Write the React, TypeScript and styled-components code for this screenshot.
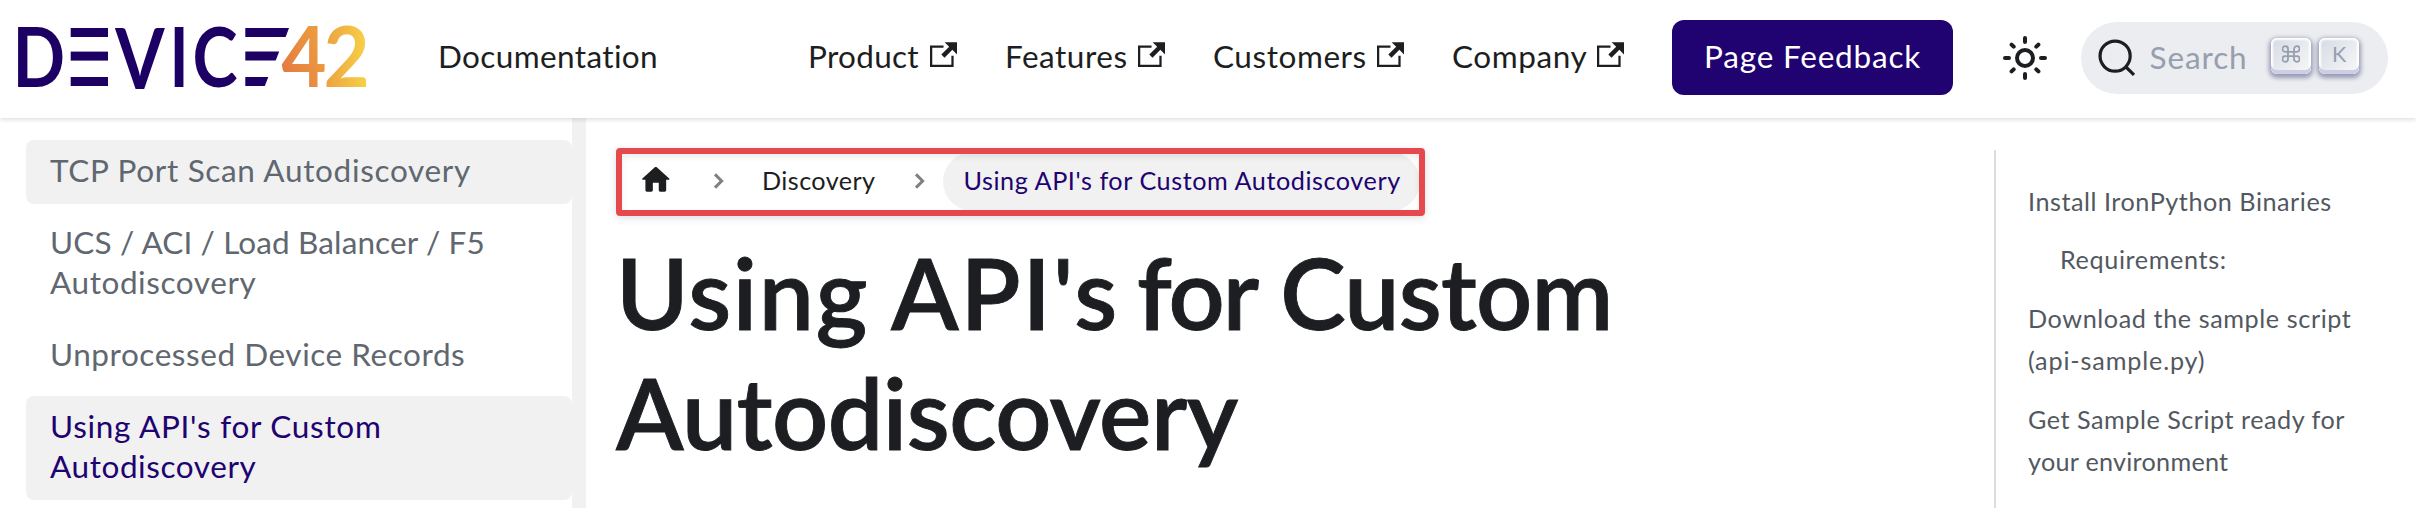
import React from "react";
import styled, { createGlobalStyle } from "styled-components";

const GlobalStyle = createGlobalStyle`
  * { box-sizing: border-box; }
  body { margin: 0; background: #fff; color: #1c1e21; font-family: Lato, "Open Sans", sans-serif; }
  a { color: inherit; text-decoration: none; }
  ul { list-style: none; margin: 0; padding: 0; }
  svg { display: block; flex: none; }
`;

const Page = styled.div`
  height: 508px;
  overflow: hidden;
  display: flex;
  flex-direction: column;
`;

const Header = styled.header`
  position: relative;
  z-index: 1;
  flex: none;
  height: 118px;
  padding: 0 28px 3px 10px;
  display: flex;
  align-items: center;
  background: #fff;
  box-shadow: 0 2px 4px rgba(0, 0, 0, 0.12);
  font-size: 31.5px;
  line-height: 40px;
  white-space: nowrap;
`;

const Brand = styled.a<{ $spacing: number }>`
  margin-left: 66px;
  padding-bottom: 4px;
  letter-spacing: ${(p) => p.$spacing}px;
`;

const Nav = styled.nav`
  margin-left: auto;
  margin-right: 48px;
  display: flex;
  gap: 48px;
`;

const NavLink = styled.a<{ $width: number; $spacing: number }>`
  width: ${(p) => p.$width}px;
  display: flex;
  align-items: center;
  justify-content: space-between;
  letter-spacing: ${(p) => p.$spacing}px;
  padding-bottom: 4px;
  svg { margin-bottom: 2px; }
`;

const FeedbackButton = styled.a`
  width: 281px;
  height: 75px;
  padding: 0 0 4px 32px;
  display: flex;
  align-items: center;
  border-radius: 12px;
  background: #200370;
  color: #fff;
  letter-spacing: 0.81px;
`;

const ThemeToggle = styled.button`
  margin: 1px 32px 0 48px;
  padding: 0;
  border: 0;
  background: none;
  color: #1c1e21;
`;

const SearchBox = styled.div`
  width: 307px;
  height: 72px;
  margin-top: 1px;
  padding: 0 29px 0 15.5px;
  display: flex;
  align-items: center;
  border-radius: 36px;
  background: #ebedf0;
  color: #1c1e21;
`;

const Placeholder = styled.span`
  flex: 1;
  margin-left: 13px;
  padding-bottom: 2px;
  color: #969faf;
  letter-spacing: 0.89px;
`;

const Keys = styled.span`
  display: flex;
  gap: 8px;
  padding-bottom: 4px;
`;

const Key = styled.kbd`
  width: 40px;
  height: 36px;
  padding-bottom: 4px;
  display: flex;
  align-items: center;
  justify-content: center;
  border-radius: 6px;
  background: linear-gradient(-225deg, #d5dbe4, #f8f8f8);
  box-shadow: inset 0 -4px 0 0 #cdcde6, inset 0 0 2px 2px #fff, 0 2px 4px 2px rgba(30, 35, 90, 0.4);
  color: #969faf;
  font: 400 21.5px/30px Lato, sans-serif;
`;

const Body = styled.div`
  flex: 1;
  min-height: 0;
  display: flex;
`;

const Sidebar = styled.aside`
  width: 586px;
  padding: 22px 0 0 26px;
  border-right: 14px solid #f1f1f1;
`;

const Menu = styled.ul`
  display: flex;
  flex-direction: column;
  gap: 8px;
`;

const MenuItem = styled.li<{ $filled?: boolean; $active?: boolean }>`
  padding: 10px 24px 14px;
  border-radius: 8px;
  background: ${(p) => (p.$filled ? "#f1f1f1" : "transparent")};
  color: ${(p) => (p.$active ? "#200370" : "#606770")};
  font-size: 31.5px;
  line-height: 40px;
`;

const Line = styled.span<{ $spacing: number }>`
  display: block;
  white-space: nowrap;
  letter-spacing: ${(p) => p.$spacing}px;
`;

const Main = styled.main`
  flex: 1;
  padding: 30px 0 0 30px;
`;

const Breadcrumbs = styled.nav`
  position: relative;
  width: 809px;
  height: 68px;
  display: flex;
  align-items: center;
  overflow: hidden;
  border: 6px solid #e5484d;
  border-radius: 4px;
  box-shadow: 0 2px 8px rgba(0, 0, 0, 0.13);
  font-size: 25.2px;
  line-height: 42px;
  white-space: nowrap;

  &::after {
    content: "";
    position: absolute;
    inset: 0;
    box-shadow: inset 0 3px 6px rgba(0, 0, 0, 0.08);
  }
`;

const HomeLink = styled.a`
  margin-left: 16px;
  padding-bottom: 4px;
`;

const Separator = styled.span<{ $before: number }>`
  margin-left: ${(p) => p.$before}px;
  padding-bottom: 2px;
`;

const Crumb = styled.a`
  width: 115px;
  margin-left: 37.4px;
  padding-bottom: 5px;
  letter-spacing: 0.43px;
`;

const CurrentCrumb = styled.span`
  flex: none;
  width: 477px;
  height: 59px;
  margin: 0 0 1px 17px;
  padding: 0 0 4px 21px;
  display: flex;
  align-items: center;
  border-radius: 30px;
  background: #f1f1f1;
  color: #200370;
  letter-spacing: 0.56px;
`;

const Title = styled.h1`
  margin: 16px 0 0;
  font-size: 98.5px;
  line-height: 120px;
  font-weight: 600;
  -webkit-text-stroke: 0.9px currentColor;
`;

const Word = styled.span<{ $spacing: number; $after?: number }>`
  letter-spacing: ${(p) => p.$spacing}px;
  margin-right: ${(p) => p.$after ?? 0}px;
`;

const Toc = styled.aside`
  width: 422px;
  margin-top: 32px;
  padding: 30px 0 0 32px;
  border-left: 2px solid #dadde1;
  color: #525860;
  font-size: 25.2px;
  line-height: 42.4px;
`;

const TocList = styled.ul`
  display: flex;
  flex-direction: column;
  gap: 16px;
`;

const TocItem = styled.li<{ $nested?: boolean }>`
  padding-left: ${(p) => (p.$nested ? 32 : 0)}px;
`;

const Logo = () => (
  <svg width="362" height="115" viewBox="10 0 362 115" role="img" aria-label="Device42">
    <defs>
      <linearGradient id="warm4" gradientUnits="userSpaceOnUse" x1="0" y1="0" x2="48" y2="-20">
        <stop offset="0" stopColor="#e37643" />
        <stop offset="1" stopColor="#eb9a40" />
      </linearGradient>
      <linearGradient id="warm2" gradientUnits="userSpaceOnUse" x1="0" y1="0" x2="46" y2="0">
        <stop offset="0" stopColor="#ec9f41" />
        <stop offset="1" stopColor="#f7d247" />
      </linearGradient>
    </defs>
    <g fontFamily="Lato, sans-serif" fontWeight="700" fontSize="83" fill="#1c0064">
      <text transform="translate(12.6 87) scale(.833 1)">D</text>
      <text transform="translate(115.2 88.6) scale(.855 1.02)">V</text>
      <text transform="translate(169.6 86.5) scale(.78 .985)">I</text>
      <text transform="translate(192.6 87) scale(.82 1)">C</text>
      <text fill="url(#warm4)" transform="translate(281.6 87) scale(.936 1.02)">4</text>
      <text fill="url(#warm2)" transform="translate(323.4 87) scale(.96 1.01)">2</text>
    </g>
    <g fill="#1c0064">
      <rect x="70.7" y="28" width="37.3" height="9" />
      <rect x="70.7" y="51.6" width="37.3" height="9" />
      <rect x="70.7" y="77" width="37.3" height="9" />
      <polygon points="245.3,28 289,28 285.6,37 245.3,37" />
      <polygon points="245.3,51.6 279.2,51.6 275.7,60.6 245.3,60.6" />
      <polygon points="245.3,77 268.3,77 264.8,86 245.3,86" />
    </g>
  </svg>
);

const ExternalIcon = () => (
  <svg width="27" height="27" viewBox="0 0 24 24" fill="currentColor">
    <path d="M21 13v10h-21v-19h12v2h-10v15h17v-8h2zm3-12h-10.988l4.035 4-6.977 7.07 2.828 2.828 6.977-7.07 4.125 4.172v-11z" />
  </svg>
);

const SunIcon = () => (
  <svg width="48" height="48" viewBox="0 0 24 24" fill="none" stroke="currentColor" strokeWidth="2" strokeLinecap="round">
    <circle cx="12" cy="12" r="4" />
    <path d="M12 2v2M12 20v2M2 12h2M20 12h2M5.29 5.29l1.06 1.06M17.65 17.65l1.06 1.06M5.29 18.71l1.06-1.06M17.65 6.35l1.06-1.06" />
  </svg>
);

const SearchIcon = () => (
  <svg width="40" height="40" viewBox="0 0 20 20" fill="none" stroke="currentColor" strokeWidth="1.6" strokeLinecap="round">
    <path d="M14.386 14.386l4.0877 4.0877-4.0877-4.0877c-2.9418 2.9419-7.7115 2.9419-10.6533 0-2.9419-2.9418-2.9419-7.7115 0-10.6533 2.9418-2.9419 7.7115-2.9419 10.6533 0 2.9419 2.9418 2.9419 7.7115 0 10.6533z" />
  </svg>
);

const CommandIcon = () => (
  <svg width="18" height="18" viewBox="0 0 18 18" fill="none" stroke="currentColor" strokeWidth="1.8">
    <path d="M6 4v10a2.8 2.8 0 1 1-2.8-2.8h11.6a2.8 2.8 0 1 1-2.8 2.8V4a2.8 2.8 0 1 1 2.8 2.8H3.2A2.8 2.8 0 1 1 6 4z" />
  </svg>
);

const HomeIcon = () => (
  <svg width="35.6" height="35.6" viewBox="0 0 24 24" fill="currentColor">
    <path d="M10 19v-5h4v5c0 .55.45 1 1 1h3c.55 0 1-.45 1-1v-7h1.7c.46 0 .68-.57.33-.87L12.67 3.6c-.38-.34-.96-.34-1.34 0l-8.36 7.53c-.34.3-.13.87.33.87H5v7c0 .55.45 1 1 1h3c.55 0 1-.45 1-1z" />
  </svg>
);

const ChevronIcon = () => (
  <svg width="12" height="18" viewBox="0 0 12 18" fill="none" stroke="#808080" strokeWidth="3">
    <path d="M2 2.4L8.6 9 2 15.6" />
  </svg>
);

const navLinks = [
  { label: "Product", width: 149, spacing: 0.3 },
  { label: "Features", width: 160, spacing: 0.51 },
  { label: "Customers", width: 191, spacing: 0.57 },
  { label: "Company", width: 172, spacing: 0.57 },
];

type TextLine = [text: string, spacing: number];

const menu: { lines: TextLine[]; filled?: boolean; active?: boolean }[] = [
  { lines: [["TCP Port Scan Autodiscovery", 0.68]], filled: true },
  { lines: [["UCS / ACI / Load Balancer / F5", 0.13], ["Autodiscovery", 0.58]] },
  { lines: [["Unprocessed Device Records", 0.55]] },
  { lines: [["Using API's for Custom", 0.72], ["Autodiscovery", 0.58]], filled: true, active: true },
];

const toc: { lines: TextLine[]; nested?: boolean }[] = [
  { lines: [["Install IronPython Binaries", 0.53]] },
  { lines: [["Requirements:", 0.62]], nested: true },
  { lines: [["Download the sample script", 0.59], ["(api-sample.py)", 0.85]] },
  { lines: [["Get Sample Script ready for", 0.52], ["your environment", 0.27]] },
];

const Lines = ({ lines }: { lines: TextLine[] }) => (
  <>
    {lines.map(([text, spacing]) => (
      <Line key={text} $spacing={spacing}>{text}</Line>
    ))}
  </>
);

export default function App() {
  return (
    <Page>
      <GlobalStyle />
      <Header>
        <Logo />
        <Brand href="#" $spacing={0.38}>Documentation</Brand>
        <Nav>
          {navLinks.map((l) => (
            <NavLink key={l.label} href="#" $width={l.width} $spacing={l.spacing}>
              {l.label}
              <ExternalIcon />
            </NavLink>
          ))}
        </Nav>
        <FeedbackButton href="#">Page Feedback</FeedbackButton>
        <ThemeToggle aria-label="Toggle theme"><SunIcon /></ThemeToggle>
        <SearchBox>
          <SearchIcon />
          <Placeholder>Search</Placeholder>
          <Keys>
            <Key><CommandIcon /></Key>
            <Key>K</Key>
          </Keys>
        </SearchBox>
      </Header>
      <Body>
        <Sidebar>
          <Menu>
            {menu.map((m, i) => (
              <MenuItem key={i} $filled={m.filled} $active={m.active}>
                <Lines lines={m.lines} />
              </MenuItem>
            ))}
          </Menu>
        </Sidebar>
        <Main>
          <Breadcrumbs>
            <HomeLink href="#" aria-label="Home"><HomeIcon /></HomeLink>
            <Separator $before={39}><ChevronIcon /></Separator>
            <Crumb href="#">Discovery</Crumb>
            <Separator $before={38}><ChevronIcon /></Separator>
            <CurrentCrumb>Using API's for Custom Autodiscovery</CurrentCrumb>
          </Breadcrumbs>
          <Title>
            <Line $spacing={-0.41}>
              <Word $spacing={1.6} $after={-2}>Using</Word>{" "}
              <Word $spacing={1.9} $after={-6.4}>API's</Word>{" "}
              <Word $spacing={-2} $after={-1}>for</Word>{" "}
              <Word $spacing={-0.7}>Custom</Word>
            </Line>
            <Line $spacing={-0.46}>Autodiscovery</Line>
          </Title>
        </Main>
        <Toc>
          <TocList>
            {toc.map((t, i) => (
              <TocItem key={i} $nested={t.nested}>
                <Lines lines={t.lines} />
              </TocItem>
            ))}
          </TocList>
        </Toc>
      </Body>
    </Page>
  );
}
